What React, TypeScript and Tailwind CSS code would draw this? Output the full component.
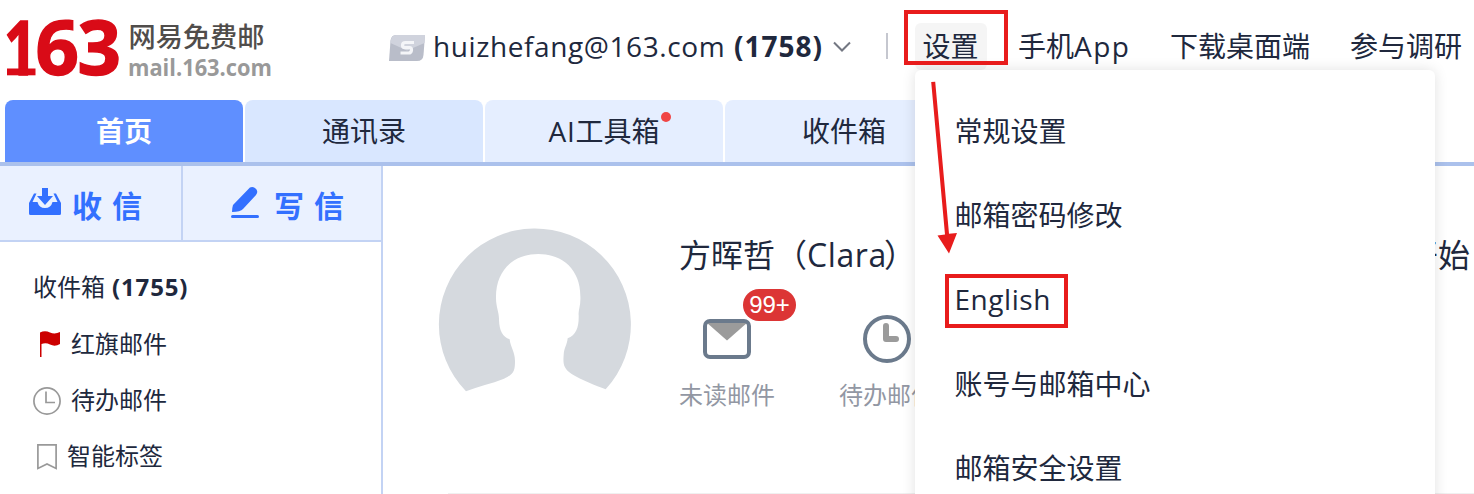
import type { ReactNode } from "react";

function Logo() {
  return (
    <svg className="block h-[100px] w-[280px] shrink-0 overflow-visible" viewBox="0 0 280 100">
      <g
        fill="#d90b17"
        stroke="#d90b17"
        strokeWidth="1.500"
        fontFamily="'Open Sans', 'Noto Sans', sans-serif"
        fontWeight="700"
        fontSize="76"
      >
        <text transform="translate(4 75) scale(.75 1)">1</text>
        <text x="35.500 77.500" y="75">63</text>
      </g>
      <rect x="7" y="68.500" width="28.500" height="6.800" fill="#d90b17" />
      <text x="128.500" y="47" fill="#504d4b" fontFamily="'Noto Sans CJK SC', sans-serif" fontWeight="500" fontSize="27.200">网易免费邮</text>
      <text x="128" y="76" fill="#999999" fontFamily="'Open Sans', sans-serif" fontWeight="700" fontSize="23" textLength="144" lengthAdjust="spacingAndGlyphs">mail.163.com</text>
    </svg>
  );
}

function StampIcon() {
  return (
    <svg className="block h-[26px] w-9 shrink-0" viewBox="0 0 36 26">
      <path d="M7 0H36L34.500 20Q34 26 28 26H0L1.500 6Q2 0 7 0Z" fill="#b9bdc9" />
      <path d="M7 0H36L35.500 8L18 15.500L1.400 8Q1.800 0 7 0Z" fill="#d0d3dd" />
      <path d="M25 7.500H16.500Q13.500 7.500 13.500 10.200Q13.500 12.600 16 12.600H20.500Q22.700 12.600 22.500 15Q22.200 18 19.500 18H11.500" fill="none" stroke="#f4f5f8" strokeWidth="3.200" />
    </svg>
  );
}

function Avatar() {
  return (
    <svg className="block h-[190px] w-[220px] shrink-0" viewBox="0 0 660 570">
      <path
        fill="#d5d9de"
        d="M108 529A288 288 0 1 1 527 523C497 511 455 496 425 477C400 460 399 447 401 420C402 398 411 391 413 370C439 359 447 337 446 300C444 287 453 270 451 243C451 166 400 117 325 117C245 117 196 172 198 250C198 276 208 294 207 315C208 347 218 366 239 373C241 396 255 410 255 438C255 466 252 478 222 491C184 506 145 514 108 529Z"
      />
    </svg>
  );
}

function Tab({ children, className }: { children: ReactNode; className: string }) {
  return (
    <div className={`flex h-[62px] w-[238px] shrink-0 items-center justify-center rounded-t-lg text-[28px] ${className}`}>
      <span className="relative">{children}</span>
    </div>
  );
}

const menuItems = [
  { label: "常规设置", className: "" },
  { label: "邮箱密码修改", className: "" },
  { label: "English", className: "tracking-[0.55px] pb-[2px]" },
  { label: "账号与邮箱中心", className: "" },
  { label: "邮箱安全设置", className: "" },
];

export default function App() {
  return (
    <div className="relative flex h-[494px] w-[1474px] flex-col overflow-hidden bg-white font-['Open_Sans','Noto_Sans_CJK_SC',sans-serif] text-[#20283d]">
      <header className="flex h-[100px] shrink-0 whitespace-nowrap text-[28px] leading-[42px]">
        <Logo />
        <div className="flex h-[92px] items-center pl-[109px]">
          <div className="pt-[3px]"><StampIcon /></div>
          <span className="ml-2 w-[301px] tracking-[0.6px]">huizhefang@163.com</span>
          <b className="w-[98px] tracking-[1px]">(1758)</b>
          <svg className="mt-[2px] h-[14px] w-5" viewBox="0 0 20 14" fill="none" stroke="#737782" strokeWidth="2">
            <path d="M2 2.500L10 10.500L18 2.500" />
          </svg>
          <span className="ml-[34px] h-[26px] w-[2px] bg-[#c5c7cf]" />
          <nav className="flex items-center">
            <span className="ml-[27px] mr-[31px] flex h-[47px] w-[72px] items-center justify-center rounded-md bg-[#f5f5f5] pr-[1px]">设置</span>
            <span className="w-[152px]">手机<span className="tracking-[1.5px]">App</span></span>
            <span className="w-[180px]">下载桌面端</span>
            <span>参与调研</span>
          </nav>
        </div>
      </header>

      <div className="flex h-[66px] shrink-0 gap-[2px] border-b-4 border-[#abc1ec] pl-[5px]">
        <Tab className="bg-[#5f8fff] font-bold text-white">首页</Tab>
        <Tab className="bg-[#d9e7ff]">通讯录</Tab>
        <Tab className="bg-[#e5eeff]">
          <span className="tracking-[0.8px]">AI</span>工具箱
          <i className="absolute -right-[11px] top-[2px] size-[10px] rounded-full bg-[#f04545]" />
        </Tab>
        <Tab className="bg-[#e5eeff]">收件箱</Tab>
      </div>

      <div className="flex min-h-0 flex-1">
        <aside className="w-[383px] shrink-0 border-r-2 border-[#c3d3f4]">
          <div className="flex h-[76px] border-b-2 border-[#c3d3f4] bg-[#eaf1ff] pt-[4px] text-[30px] font-bold text-[#3370ff]">
            <div className="-mt-[4px] flex w-[183px] items-center border-r-2 border-[#c3d3f4] pl-[29px] pt-[4px]">
              <svg className="mb-[6px] h-7 w-8" viewBox="0 0 32 28" fill="currentColor">
                <path d="M13 0H19V8H24L16 17L8 8H13Z" />
                <path d="M0 15L5 5.500H7.500L3.500 14H8.500Q10 20 16 20Q22 20 23.500 14H28.500L24.500 5.500H27L32 15V25.500Q32 27 30.500 27H1.500Q0 27 0 25.500Z" />
              </svg>
              <span className="ml-[11px]">收<span className="ml-[10px]">信</span></span>
            </div>
            <div className="flex items-center pl-12">
              <svg className="mb-[6px] h-[31px] w-7" viewBox="0 0 28 31" fill="currentColor">
                <path d="M2 18L17 2.500Q20-1.500 24 1Q28 4 25 8L12 22Q9.500 25 1 25Q1 21 2 18Z" />
                <rect y="28" width="28" height="3" rx="1.500" />
              </svg>
              <span className="ml-[15px]">写<span className="ml-[10px]">信</span></span>
            </div>
          </div>
          <ul className="flex flex-col pt-[17px] text-2xl leading-[55px] whitespace-nowrap">
            <li className="flex h-14 pl-[33px]">收件箱<b className="ml-[7px] tracking-[0.85px]">(1755)</b></li>
            <li className="flex h-14 items-center pl-[40px]">
              <svg className="mt-px h-[26px] w-5" viewBox="0 0 20 26" fill="#c00">
                <path d="M0 1.500Q5-1 10 1.500Q15 3.500 20 1V13Q15 16 10 13.500Q6 11.500 1.500 13V26H0Z" />
              </svg>
              <span className="ml-[11px]">红旗邮件</span>
            </li>
            <li className="flex h-14 items-center pl-[33px]">
              <svg className="mt-[3px] h-7 w-7" viewBox="0 0 28 28" fill="none" stroke="#999" strokeWidth="1.700">
                <circle cx="14" cy="14" r="13.100" />
                <path d="M13 4.500V15.500H22" />
              </svg>
              <span className="ml-[10px]">待办邮件</span>
            </li>
            <li className="flex h-14 items-center pl-[37px]">
              <svg className="mt-[4px] h-[26px] w-5" viewBox="0 0 20 26" fill="none" stroke="#999" strokeWidth="1.700">
                <path d="M.9.900H19.100V24.500L10 20L.9 24.500Z" />
              </svg>
              <span className="ml-[10px]">智能标签</span>
            </li>
          </ul>
        </aside>

        <main className="flex min-w-0 flex-1 flex-col whitespace-nowrap">
          <div className="flex h-[327px] shrink-0 pl-[47px] pt-[49px]">
            <Avatar />
            <section className="ml-[29px] pt-[16px]">
              <h1 className="h-12 w-[790px] text-[32px] leading-[48px]">方晖哲（<span className="tracking-[0.6px]">Clara</span><span className="-ml-[3px]">）</span></h1>
              <div className="flex gap-16 pt-9 text-2xl text-[#9297a3]">
                <div className="flex w-24 flex-col items-center">
                  <div className="relative">
                    <svg className="h-12 w-12" viewBox="0 0 48 48">
                      <path d="M3 7H45L24 25.500Z" fill="#9b9b9b" />
                      <rect x="2" y="6" width="44" height="36" rx="5" fill="none" stroke="#6b7a8c" strokeWidth="4" />
                    </svg>
                    <span className="absolute left-10 top-[-26px] flex h-8 w-[53px] items-center justify-center rounded-full bg-[#dc3535] font-['Liberation_Sans',sans-serif] text-2xl text-white">99+</span>
                  </div>
                  <span className="mt-[14px] leading-9">未读邮件</span>
                </div>
                <div className="flex w-24 flex-col items-center">
                  <svg className="h-12 w-12" viewBox="0 0 48 48" fill="none">
                    <circle cx="24" cy="24" r="22" stroke="#6b7a8c" strokeWidth="4" />
                    <path d="M23 11V24H33" stroke="#9b9b9b" strokeWidth="6" strokeLinecap="round" strokeLinejoin="round" />
                  </svg>
                  <span className="mt-[14px] leading-9">待办邮件</span>
                </div>
              </div>
            </section>
            <span className="-ml-[63px] pt-[16px] text-[32px] leading-[48px]">开始</span>
          </div>
          <hr className="ml-[65px] border-[#f0f0f0]" />
        </main>
      </div>

      <div className="absolute left-[915px] top-[70px] flex h-[440px] w-[520px] flex-col rounded-md bg-white pl-[39.5px] pt-[19px] text-[28px] shadow-[0_0_14px_rgba(0,0,0,0.12)]">
        {menuItems.map((item) => (
          <div key={item.label} className={`flex h-[84.3px] shrink-0 items-center ${item.className}`}>{item.label}</div>
        ))}
      </div>

      <div className="absolute left-[904px] top-[10px] h-[55px] w-[104px] border-4 border-[#e81c1c]" />
      <div className="absolute left-[945px] top-[274px] h-[54px] w-[123px] border-4 border-[#e81c1c]" />
      <svg className="absolute left-[925px] top-[80px] h-[180px] w-8" viewBox="0 0 32 180" fill="#e81c1c">
        <path d="M6.200 2L10.200 1.800L24 153.800L32 153L24 173.500L12.500 155.500L20 154.500Z" />
      </svg>
    </div>
  );
}
